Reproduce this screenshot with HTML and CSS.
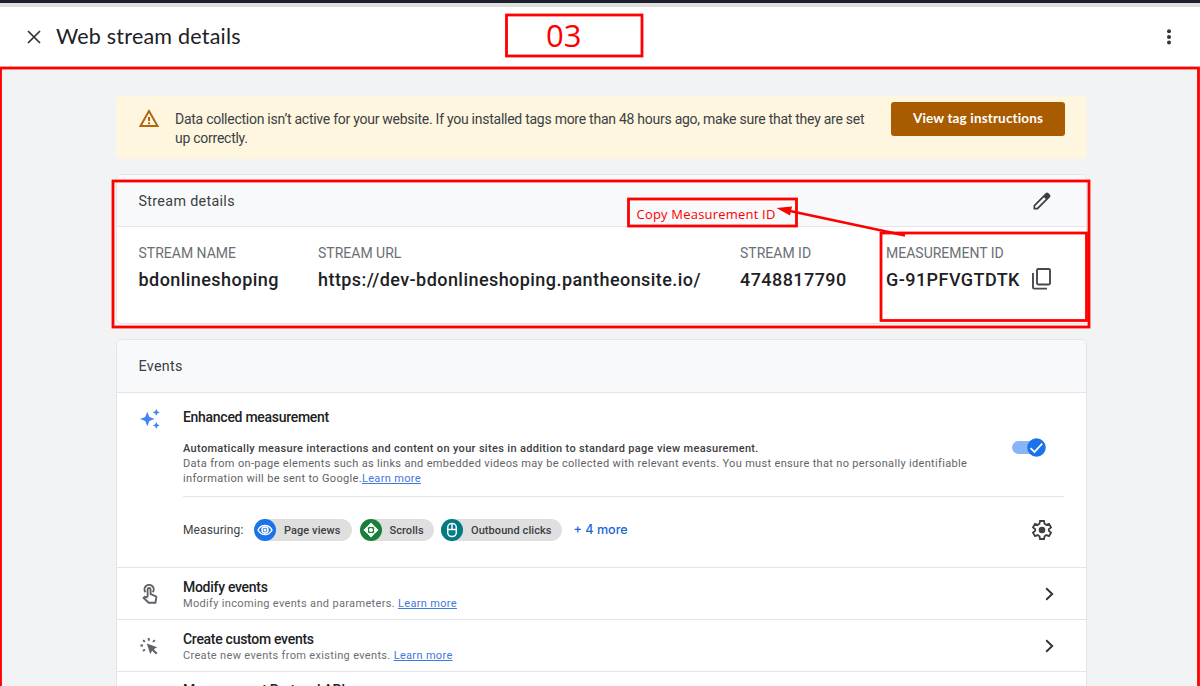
FILE: index.html
```html
<!DOCTYPE html>
<html lang="en">
<head>
  <meta charset="UTF-8" />
  <title>Web stream details</title>
  <link rel="stylesheet" href="styles.css">
</head>
<body>
  <div class="page">
    <div class="top-strip"></div>

    <div class="header">
      <svg class="close" viewBox="0 0 14 14"><path d="M1 1L13 13M13 1L1 13"/></svg>
      <h1>Web stream details</h1>
      <svg class="more" viewBox="0 0 4 16"><circle cx="2" cy="2.2" r="2"/><circle cx="2" cy="7.9" r="2"/><circle cx="2" cy="13.6" r="2"/></svg>
    </div>

    <div class="content">
      <div class="banner">
        <svg class="warning" viewBox="0 0 22 19"><path fill-rule="evenodd" d="M11 0L21.2 18H.8zM11 4L4.2 16H17.8zM10 8H12V12H10zM10 13.2H12V15.2H10z"/></svg>
        <p>Data collection isn’t active for your website. If you installed tags more than 48 hours ago, make sure that they are set up correctly.</p>
        <button class="tag-btn">View tag instructions</button>
      </div>

      <div class="card stream">
        <div class="card-title">
          <span>Stream details</span>
          <svg class="pencil" viewBox="0 0 18 18"><path fill-rule="evenodd" d="M.5 17.5V13.2L12.8 1Q14 0 15.2 1L17 2.8Q18 4 17 5.2L4.8 17.5zM2.2 14V15.8H4L12.8 7L11 5.2z"/></svg>
        </div>
        <div class="stream-info">
          <div class="field"><label>STREAM NAME</label><div class="value">bdonlineshoping</div></div>
          <div class="field"><label>STREAM URL</label><div class="value">https://dev-bdonlineshoping.pantheonsite.io/</div></div>
          <div class="field"><label>STREAM ID</label><div class="value">4748817790</div></div>
          <div class="field"><label>MEASUREMENT ID</label>
            <div class="value">G-91PFVGTDTK
              <svg class="copy" viewBox="0 0 19 22"><rect x="5" y="1" width="13" height="15.5" rx="1.2"/><path d="M1 5V19.5Q1 20.6 2.1 20.6H15"/></svg>
            </div>
          </div>
        </div>
      </div>

      <div class="card events">
        <div class="card-title"><span>Events</span></div>

        <div class="enhanced">
          <svg class="sparkle" viewBox="0 0 20 20"><path d="M7.3 2.7L9.4 8L14.6 10L9.4 12L7.3 17.3L5.2 12L0 10L5.2 8zM16.3 0L17.4 2.3L19.7 3.4L17.4 4.5L16.3 6.8L15.2 4.5L12.9 3.4L15.2 2.3zM16.3 13L17.4 15.3L19.7 16.4L17.4 17.5L16.3 19.8L15.2 17.5L12.9 16.4L15.2 15.3z"/></svg>
          <div class="enhanced-body">
            <h2>Enhanced measurement</h2>
            <div class="description">
              <div class="text">
                <b>Automatically measure interactions and content on your sites in addition to standard page view measurement.</b>
                <p>Data from on-page elements such as links and embedded videos may be collected with relevant events. You must ensure that no personally identifiable information will be sent to Google.<a class="learn" href="#">Learn more</a></p>
              </div>
              <div class="toggle">
                <svg class="knob" viewBox="0 0 19 19"><circle cx="9.5" cy="9.5" r="9.3"/><path d="M3.6 10.2L7.4 14L15.2 5.6"/></svg>
              </div>
            </div>
            <div class="measuring">
              <span class="label">Measuring:</span>
              <div class="chip views">
                <svg viewBox="0 0 22 22"><circle class="bg" cx="11" cy="11" r="11"/><path class="line" d="M4 11C7.2 4.9 14.8 4.9 18 11C14.8 17.1 7.2 17.1 4 11z"/><circle class="line" cx="11" cy="11" r="3"/><circle class="solid" cx="11" cy="11" r="1.5"/></svg>
                <span>Page views</span>
              </div>
              <div class="chip scrolls">
                <svg viewBox="0 0 22 22"><circle class="bg" cx="11" cy="11" r="11"/><path class="solid" d="M11 3.5L14.2 6.9L11.9 8H10.1L7.8 6.9zM18.5 11L15.1 14.2L14 11.9V10.1L15.1 7.8zM11 18.5L7.8 15.1L10.1 14H11.9L14.2 15.1zM3.5 11L6.9 7.8L8 10.1V11.9L6.9 14.2z"/><path class="line" d="M11 4.8L17.2 11L11 17.2L4.8 11z"/><circle class="solid" cx="11" cy="11" r="2.1"/></svg>
                <span>Scrolls</span>
              </div>
              <div class="chip clicks">
                <svg viewBox="0 0 22 22"><circle class="bg" cx="11" cy="11" r="11"/><rect class="line" x="6.7" y="4.6" width="8.6" height="13" rx="4"/><path class="line" d="M6.7 10.4H15.3M11 4.6V10.4"/></svg>
                <span>Outbound clicks</span>
              </div>
              <a class="four-more" href="#">+ 4 more</a>
              <svg class="gear" viewBox="0 0 20 20"><path d="M8 1H12L12.5 3.8L14.4 4.9L17 3.9L19 7.4L16.8 9.2V10.8L19 12.6L17 16.1L14.4 15.1L12.5 16.2L12 19H8L7.5 16.2L5.6 15.1L3 16.1L1 12.6L3.2 10.8V9.2L1 7.4L3 3.9L5.6 4.9L7.5 3.8z"/><circle cx="10" cy="10" r="3.3"/></svg>
            </div>
          </div>
        </div>

        <div class="row">
          <svg class="row-icon" viewBox="0 0 20 20"><path class="outline" d="M4.4 8.2A4.6 4.6 0 1 1 11.8 8.2"/><path class="outline" d="M6.6 13V5.5A1.5 1.5 0 0 1 9.6 5.5V10L14.5 12.1Q15.5 12.6 15.3 13.7L14.4 18.8H7.7L2.6 13.9L3.7 12.8L6.6 13.6"/></svg>
          <div class="row-text">
            <h3>Modify events</h3>
            <p>Modify incoming events and parameters. <a class="learn" href="#">Learn more</a></p>
          </div>
          <svg class="chevron" viewBox="0 0 9 14"><path d="M1.2 1.2L7.2 7L1.2 12.8"/></svg>
        </div>

        <div class="row">
          <svg class="row-icon custom" viewBox="0 0 20 20"><path class="fill" d="M6.8 7.6L17.2 11.3L13.7 13.3L17.5 17.1L16 18.6L12.2 14.8L10.2 18.1z"/><path class="dash" d="M8.8 2V4.7M3.1 4.1L4.9 5.9M14.8 4.1L13 5.9M.4 9.5H3M3.1 15.2L4.9 13.4"/></svg>
          <div class="row-text">
            <h3>Create custom events</h3>
            <p>Create new events from existing events. <a class="learn" href="#">Learn more</a></p>
          </div>
          <svg class="chevron" viewBox="0 0 9 14"><path d="M1.2 1.2L7.2 7L1.2 12.8"/></svg>
        </div>

        <div class="row last">
          <div class="row-icon"></div>
          <div class="row-text"><h3>Measurement Protocol API</h3></div>
        </div>
      </div>
    </div>

    <!-- step markers drawn over the page -->
    <svg class="marks" viewBox="0 0 1200 686">
      <rect x="506.5" y="15" width="135.5" height="41"/>
      <rect x="0.5" y="68" width="1198" height="640"/>
      <rect x="113" y="181" width="976" height="146"/>
      <rect x="628.5" y="199" width="168" height="27"/>
      <rect x="881" y="233" width="205.5" height="87.5"/>
      <path d="M905 235.5L790 211"/>
      <path class="head" d="M776.5 208L792 206.5L790 215.5z"/>
    </svg>
    <div class="step">03</div>
    <div class="note">Copy Measurement ID</div>
  </div>
</body>
</html>
```
FILE: styles.css
```css
* {
  box-sizing: border-box;
}

body {
  margin: 0;
  font-family: Roboto, sans-serif;
  background: #f1f3f4;
  color: #3c4043;
}

h1, h2, h3, p {
  margin: 0;
  font-weight: 400;
}

svg {
  display: block;
  flex: none;
}

.page {
  position: relative;
  width: 1200px;
  height: 686px;
  overflow: hidden;
}

.top-strip {
  height: 7px;
  background: #dededd;
  border-top: 3px solid #1c202a;
}

.header {
  display: flex;
  align-items: center;
  height: 60px;
  padding: 0 29px 1px 27px;
  background: #fff;
}

.header h1 {
  flex: 1;
  margin-left: 15px;
  padding-bottom: 1px;
  font-family: Lato, sans-serif;
  font-size: 21.5px;
  letter-spacing: 0.22px;
  color: #202124;
}

.close {
  width: 14px;
  height: 14px;
  stroke: #303238;
  stroke-width: 1.7;
}

.more {
  width: 4px;
  height: 16px;
  fill: #303640;
}

.content {
  padding: 29px 113px 0 116px;
}

.banner {
  display: flex;
  align-items: flex-start;
  height: 63px;
  padding: 6px 22px 0;
  background: #fef6df;
  border-radius: 6px;
}

.warning {
  width: 22px;
  height: 19px;
  margin-top: 7px;
  fill: #b0660e;
}

.banner p {
  width: 716px;
  margin-left: 15px;
  padding-top: 8px;
  padding-right: 20px;
  font-size: 14px;
  line-height: 18.5px;
  letter-spacing: -0.26px;
}

.tag-btn {
  width: 174px;
  height: 34px;
  padding: 0 0 2px;
  border: 0;
  border-radius: 3px;
  background: #a85b00;
  color: #fff;
  font: 700 13.5px Lato, sans-serif;
  letter-spacing: 0.15px;
}

.card {
  background: #fff;
  border: 1px solid #e3e5e8;
  border-radius: 6px;
  overflow: hidden;
}

.card-title {
  display: flex;
  align-items: center;
  justify-content: space-between;
  height: 52px;
  padding: 0 35px 0 21.5px;
  background: #f8f9fb;
  border-bottom: 1px solid #e3e5e8;
  font-size: 14.3px;
  letter-spacing: 0.33px;
}

.stream {
  height: 150px;
  margin-top: 15px;
}

.pencil {
  width: 18px;
  height: 18px;
  fill: #3c4043;
}

.stream-info {
  display: grid;
  grid-template-columns: 179.5px 422px 146px 1fr;
  padding: 17px 0 0 21.5px;
}

.field label {
  display: block;
  font-size: 14px;
  line-height: 18px;
  color: #6b6f74;
}

.value {
  display: flex;
  align-items: center;
  height: 28px;
  margin-top: 3px;
  font-size: 18px;
  font-weight: 500;
  letter-spacing: 0.44px;
  color: #202124;
}

.copy {
  width: 19px;
  height: 22px;
  margin-left: 12px;
  fill: none;
  stroke: #45484c;
  stroke-width: 1.9;
}

.events {
  height: 370px;
  margin-top: 15px;
}

.events .card-title {
  height: 53px;
}

.enhanced {
  display: flex;
  height: 174px;
  padding: 0 22px 0 23px;
}

.sparkle {
  width: 20px;
  height: 20px;
  margin-top: 16px;
  fill: #4285f4;
}

.enhanced-body {
  flex: 1;
  margin-left: 23px;
}

h2, h3 {
  font-size: 14px;
  font-weight: 500;
  letter-spacing: -0.29px;
  color: #202124;
}

h2 {
  padding-top: 15px;
  line-height: 18px;
}

.description {
  display: flex;
  justify-content: space-between;
  height: 71px;
  padding: 15px 19px 0 0;
  border-bottom: 1px solid #e3e5e8;
}

.text {
  width: 800px;
  padding-top: 1px;
  font-size: 11px;
  line-height: 14.8px;
  letter-spacing: 0.33px;
}

.text b {
  font-weight: 500;
}

.text p {
  color: #5f6368;
}

.learn {
  color: #3f78df;
}

.toggle {
  position: relative;
  width: 33px;
  height: 13px;
  background: #8ab4f8;
  border-radius: 7px;
}

.knob {
  position: absolute;
  right: -1px;
  top: -3px;
  width: 19px;
  height: 19px;
  fill: #1a73e8;
}

.knob path {
  fill: none;
  stroke: #fff;
  stroke-width: 1.8;
}

.measuring {
  display: flex;
  align-items: center;
  height: 66px;
  padding-right: 12px;
}

.label {
  width: 71px;
  font-size: 12px;
  letter-spacing: 0.1px;
}

.chip {
  display: flex;
  align-items: center;
  height: 22px;
  margin-right: 7.5px;
  border-radius: 11px;
  background: #dfdfdf;
  font-size: 11px;
  font-weight: 500;
  letter-spacing: 0.07px;
}

.chip svg {
  width: 22px;
  height: 22px;
  margin-right: 8px;
}

.views {
  width: 98px;
}

.scrolls {
  width: 74px;
}

.clicks {
  width: 121px;
}

.views .bg { fill: #1a73e8; }
.scrolls .bg { fill: #188038; }
.clicks .bg { fill: #007b83; }

.chip .line {
  fill: none;
  stroke: #fff;
  stroke-width: 1.5;
}

.solid {
  fill: #fff;
}

.four-more {
  margin-left: 4px;
  padding-bottom: 1px;
  font: 500 12.6px Inter, sans-serif;
  color: #1967d2;
  text-decoration: none;
}

.gear {
  width: 20px;
  height: 20px;
  margin-left: auto;
  fill: none;
  stroke: #3c4043;
  stroke-width: 1.8;
}

.gear circle {
  fill: #3c4043;
  stroke: none;
}

.row {
  display: flex;
  align-items: center;
  height: 52px;
  padding: 0 32px 0 24px;
  border-top: 1px solid #e3e5e8;
}

.row-icon {
  width: 20px;
  height: 20px;
}

.custom {
  margin: 0 1px 0 -1px;
}

.outline, .dash {
  fill: none;
  stroke: #5f6368;
  stroke-width: 1.9;
}

.fill {
  fill: #5f6368;
}

.row-text {
  flex: 1;
  margin-left: 22px;
  padding-top: 3px;
}

.row h3 {
  line-height: 17px;
}

.row p {
  font-size: 11px;
  line-height: 16px;
  letter-spacing: 0.33px;
  color: #6b6f74;
}

.chevron {
  width: 9px;
  height: 14px;
  fill: none;
  stroke: #303238;
  stroke-width: 1.9;
}

.last {
  height: 56px;
  align-items: flex-start;
  padding-top: 7px;
}

.marks {
  position: absolute;
  left: 0;
  top: 0;
  width: 1200px;
  height: 686px;
  fill: none;
  stroke: #fe0000;
  stroke-width: 2.8;
}

.marks .head {
  fill: #fe0000;
  stroke: none;
}

.step, .note {
  position: absolute;
  font-family: "Open Sans", sans-serif;
  color: #fe0000;
  white-space: nowrap;
}

.step {
  left: 546px;
  top: 15px;
  font-size: 31px;
  line-height: 40px;
}

.note {
  left: 636.5px;
  top: 204px;
  font-size: 13px;
  line-height: 20px;
  letter-spacing: 0.2px;
}
```
